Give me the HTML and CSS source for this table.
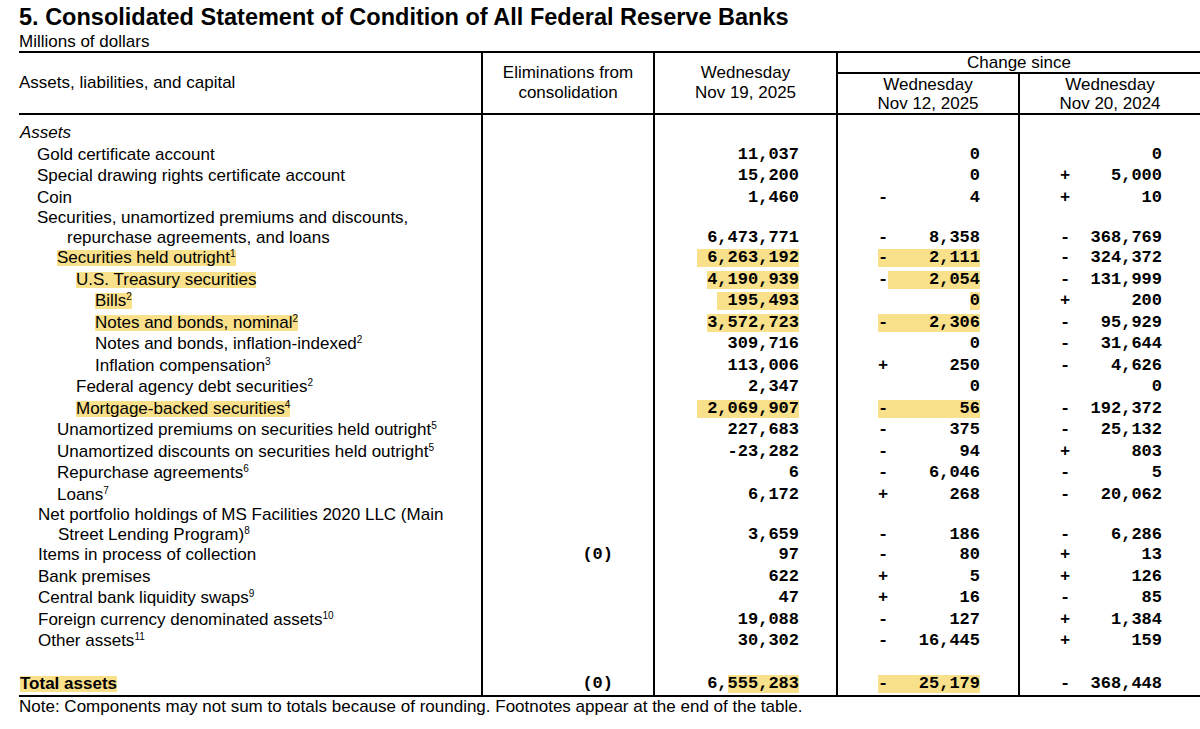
FILE: index.html
```html
<!DOCTYPE html>
<html lang="en">
<head>
<meta charset="utf-8">
<title>Consolidated Statement of Condition of All Federal Reserve Banks</title>
<link rel="stylesheet" href="styles.css">
</head>
<body>
<div class="page">
  <h1 class="title">5. Consolidated Statement of Condition of All Federal Reserve Banks</h1>
  <p class="unit">Millions of dollars</p>
  <table class="stmt">
    <colgroup>
      <col class="w-label"><col class="w-elim"><col class="w-val"><col class="w-chg"><col class="w-chg">
    </colgroup>
    <thead>
      <tr>
        <th rowspan="2" class="h-label">Assets, liabilities, and capital</th>
        <th rowspan="2" class="h-main vl">Eliminations from<br>consolidation</th>
        <th rowspan="2" class="h-main vl">Wednesday<br>Nov 19, 2025</th>
        <th colspan="2" class="h-change vl">Change since</th>
      </tr>
      <tr>
        <th class="h-sub vl">Wednesday<br>Nov 12, 2025</th>
        <th class="h-sub vl">Wednesday<br>Nov 20, 2024</th>
      </tr>
    </thead>
    <tbody>
      <tr class="first">
        <td class="lab l0"><em>Assets</em></td>
        <td class="num elim vl"></td><td class="num val vl"></td><td class="num chg vl"></td><td class="num chg vl"></td>
      </tr>
      <tr>
        <td class="lab l1">Gold certificate account</td>
        <td class="num elim vl"></td>
        <td class="num val vl">11,037</td>
        <td class="num chg vl"><span class="fld"><span class="sg"></span><span>0</span></span></td>
        <td class="num chg vl"><span class="fld"><span class="sg"></span><span>0</span></span></td>
      </tr>
      <tr>
        <td class="lab l1">Special drawing rights certificate account</td>
        <td class="num elim vl"></td>
        <td class="num val vl">15,200</td>
        <td class="num chg vl"><span class="fld"><span class="sg"></span><span>0</span></span></td>
        <td class="num chg vl"><span class="fld"><span class="sg">+</span><span>5,000</span></span></td>
      </tr>
      <tr>
        <td class="lab l1">Coin</td>
        <td class="num elim vl"></td>
        <td class="num val vl">1,460</td>
        <td class="num chg vl"><span class="fld"><span class="sg">-</span><span>4</span></span></td>
        <td class="num chg vl"><span class="fld"><span class="sg">+</span><span>10</span></span></td>
      </tr>
      <tr class="two">
        <td class="lab hang-a">Securities, unamortized premiums and discounts,<br>repurchase agreements, and loans</td>
        <td class="num elim vl"></td>
        <td class="num val vl">6,473,771</td>
        <td class="num chg vl"><span class="fld"><span class="sg">-</span><span>8,358</span></span></td>
        <td class="num chg vl"><span class="fld"><span class="sg">-</span><span>368,769</span></span></td>
      </tr>
      <tr>
        <td class="lab l2"><span class="hl-t">Securities held outright<sup>1</sup></span></td>
        <td class="num elim vl"></td>
        <td class="num val vl"><span class="hl pad">6,263,192</span></td>
        <td class="num chg vl"><span class="fld hl"><span class="sg">-</span><span>2,111</span></span></td>
        <td class="num chg vl"><span class="fld"><span class="sg">-</span><span>324,372</span></span></td>
      </tr>
      <tr>
        <td class="lab l3"><span class="hl-t">U.S. Treasury securities</span></td>
        <td class="num elim vl"></td>
        <td class="num val vl"><span class="hl">4,190,939</span></td>
        <td class="num chg vl"><span class="fld"><span class="sg">-</span><span class="hl fill">2,054</span></span></td>
        <td class="num chg vl"><span class="fld"><span class="sg">-</span><span>131,999</span></span></td>
      </tr>
      <tr>
        <td class="lab l4"><span class="hl-t">Bills<sup>2</sup></span></td>
        <td class="num elim vl"></td>
        <td class="num val vl"><span class="hl pad">195,493</span></td>
        <td class="num chg vl"><span class="fld"><span class="sg"></span><span class="hl">0</span></span></td>
        <td class="num chg vl"><span class="fld"><span class="sg">+</span><span>200</span></span></td>
      </tr>
      <tr>
        <td class="lab l4"><span class="hl-t">Notes and bonds, nominal<sup>2</sup></span></td>
        <td class="num elim vl"></td>
        <td class="num val vl"><span class="hl">3,572,723</span></td>
        <td class="num chg vl"><span class="fld hl"><span class="sg">-</span><span>2,306</span></span></td>
        <td class="num chg vl"><span class="fld"><span class="sg">-</span><span>95,929</span></span></td>
      </tr>
      <tr>
        <td class="lab l4">Notes and bonds, inflation-indexed<sup>2</sup></td>
        <td class="num elim vl"></td>
        <td class="num val vl">309,716</td>
        <td class="num chg vl"><span class="fld"><span class="sg"></span><span>0</span></span></td>
        <td class="num chg vl"><span class="fld"><span class="sg">-</span><span>31,644</span></span></td>
      </tr>
      <tr>
        <td class="lab l4">Inflation compensation<sup>3</sup></td>
        <td class="num elim vl"></td>
        <td class="num val vl">113,006</td>
        <td class="num chg vl"><span class="fld"><span class="sg">+</span><span>250</span></span></td>
        <td class="num chg vl"><span class="fld"><span class="sg">-</span><span>4,626</span></span></td>
      </tr>
      <tr>
        <td class="lab l3">Federal agency debt securities<sup>2</sup></td>
        <td class="num elim vl"></td>
        <td class="num val vl">2,347</td>
        <td class="num chg vl"><span class="fld"><span class="sg"></span><span>0</span></span></td>
        <td class="num chg vl"><span class="fld"><span class="sg"></span><span>0</span></span></td>
      </tr>
      <tr>
        <td class="lab l3"><span class="hl-t">Mortgage-backed securities<sup>4</sup></span></td>
        <td class="num elim vl"></td>
        <td class="num val vl"><span class="hl pad">2,069,907</span></td>
        <td class="num chg vl"><span class="fld hl"><span class="sg">-</span><span>56</span></span></td>
        <td class="num chg vl"><span class="fld"><span class="sg">-</span><span>192,372</span></span></td>
      </tr>
      <tr>
        <td class="lab l2">Unamortized premiums on securities held outright<sup>5</sup></td>
        <td class="num elim vl"></td>
        <td class="num val vl">227,683</td>
        <td class="num chg vl"><span class="fld"><span class="sg">-</span><span>375</span></span></td>
        <td class="num chg vl"><span class="fld"><span class="sg">-</span><span>25,132</span></span></td>
      </tr>
      <tr>
        <td class="lab l2">Unamortized discounts on securities held outright<sup>5</sup></td>
        <td class="num elim vl"></td>
        <td class="num val vl">-23,282</td>
        <td class="num chg vl"><span class="fld"><span class="sg">-</span><span>94</span></span></td>
        <td class="num chg vl"><span class="fld"><span class="sg">+</span><span>803</span></span></td>
      </tr>
      <tr>
        <td class="lab l2">Repurchase agreements<sup>6</sup></td>
        <td class="num elim vl"></td>
        <td class="num val vl">6</td>
        <td class="num chg vl"><span class="fld"><span class="sg">-</span><span>6,046</span></span></td>
        <td class="num chg vl"><span class="fld"><span class="sg">-</span><span>5</span></span></td>
      </tr>
      <tr>
        <td class="lab l2">Loans<sup>7</sup></td>
        <td class="num elim vl"></td>
        <td class="num val vl">6,172</td>
        <td class="num chg vl"><span class="fld"><span class="sg">+</span><span>268</span></span></td>
        <td class="num chg vl"><span class="fld"><span class="sg">-</span><span>20,062</span></span></td>
      </tr>
      <tr class="two">
        <td class="lab hang-b">Net portfolio holdings of MS Facilities 2020 LLC (Main<br>Street Lending Program)<sup>8</sup></td>
        <td class="num elim vl"></td>
        <td class="num val vl">3,659</td>
        <td class="num chg vl"><span class="fld"><span class="sg">-</span><span>186</span></span></td>
        <td class="num chg vl"><span class="fld"><span class="sg">-</span><span>6,286</span></span></td>
      </tr>
      <tr>
        <td class="lab l1b">Items in process of collection</td>
        <td class="num elim vl">(0)</td>
        <td class="num val vl">97</td>
        <td class="num chg vl"><span class="fld"><span class="sg">-</span><span>80</span></span></td>
        <td class="num chg vl"><span class="fld"><span class="sg">+</span><span>13</span></span></td>
      </tr>
      <tr>
        <td class="lab l1b">Bank premises</td>
        <td class="num elim vl"></td>
        <td class="num val vl">622</td>
        <td class="num chg vl"><span class="fld"><span class="sg">+</span><span>5</span></span></td>
        <td class="num chg vl"><span class="fld"><span class="sg">+</span><span>126</span></span></td>
      </tr>
      <tr>
        <td class="lab l1b">Central bank liquidity swaps<sup>9</sup></td>
        <td class="num elim vl"></td>
        <td class="num val vl">47</td>
        <td class="num chg vl"><span class="fld"><span class="sg">+</span><span>16</span></span></td>
        <td class="num chg vl"><span class="fld"><span class="sg">-</span><span>85</span></span></td>
      </tr>
      <tr>
        <td class="lab l1b">Foreign currency denominated assets<sup>10</sup></td>
        <td class="num elim vl"></td>
        <td class="num val vl">19,088</td>
        <td class="num chg vl"><span class="fld"><span class="sg">-</span><span>127</span></span></td>
        <td class="num chg vl"><span class="fld"><span class="sg">+</span><span>1,384</span></span></td>
      </tr>
      <tr>
        <td class="lab l1b">Other assets<sup>11</sup></td>
        <td class="num elim vl"></td>
        <td class="num val vl">30,302</td>
        <td class="num chg vl"><span class="fld"><span class="sg">-</span><span>16,445</span></span></td>
        <td class="num chg vl"><span class="fld"><span class="sg">+</span><span>159</span></span></td>
      </tr>
      <tr class="blank">
        <td class="lab"></td>
        <td class="num elim vl"></td><td class="num val vl"></td><td class="num chg vl"></td><td class="num chg vl"></td>
      </tr>
      <tr class="total">
        <td class="lab l0"><span class="hl-t"><strong>Total assets</strong></span></td>
        <td class="num elim vl">(0)</td>
        <td class="num val vl">6,<span class="hl">555,283</span></td>
        <td class="num chg vl"><span class="fld hl"><span class="sg">-</span><span>25,179</span></span></td>
        <td class="num chg vl"><span class="fld"><span class="sg">-</span><span>368,448</span></span></td>
      </tr>
    </tbody>
  </table>
  <p class="note">Note: Components may not sum to totals because of rounding. Footnotes appear at the end of the table.</p>
</div>
</body>
</html>
```

FILE: styles.css
```css
* { box-sizing: border-box; }

html, body {
  margin: 0;
  padding: 0;
  background: #ffffff;
}

body {
  font-family: "Liberation Sans", Arial, sans-serif;
  font-size: 17px;
  color: #000000;
  overflow: hidden;
}

.page {
  width: 1200px;
  padding: 4px 0 0 19px;
}

.title {
  margin: 0;
  font-size: 23.5px;
  font-weight: bold;
  line-height: 26px;
}

.unit {
  margin: 3px 0 0;
  font-size: 17px;
  line-height: 18px;
}

.stmt {
  margin-top: 0;
  width: 1181px;
  table-layout: fixed;
  border-collapse: separate;
  border-spacing: 0;
  border-top: 2px solid #000;
}

.w-label { width: 462px; }
.w-elim { width: 172px; }
.w-val { width: 183px; }
.w-chg { width: 182px; }

.stmt th {
  padding: 0;
  font-weight: normal;
  text-align: center;
  vertical-align: middle;
  border-bottom: 2px solid #000;
}

.stmt .vl { border-left: 2px solid #000; }

.h-label {
  text-align: left !important;
  line-height: 20px;
}

.h-main { line-height: 20px; }

.h-change { line-height: 19px; }

.h-sub {
  line-height: 19px;
  padding-top: 1px !important;
}

.stmt td {
  padding: 0;
  height: 21.5px;
  line-height: 21.5px;
  white-space: nowrap;
  vertical-align: bottom;
}

.stmt tr.first td { padding-top: 7px; height: 28.5px; }

.stmt tr.two td { line-height: 19.5px; height: 39px; }

.stmt tr.blank td { height: 22.5px; }

.stmt tr.total td {
  height: 20.5px;
  line-height: 20.5px;
  border-bottom: 2px solid #000;
}

.lab { text-align: left; }
.l0 { padding-left: 1px !important; }
.l1 { padding-left: 18px !important; }
.l1b { padding-left: 19px !important; }
.l2 { padding-left: 38px !important; }
.l3 { padding-left: 57px !important; }
.l4 { padding-left: 76px !important; }

.hang-a {
  padding-left: 48px !important;
  text-indent: -30px;
}

.hang-b {
  padding-left: 39px !important;
  text-indent: -20px;
}

.lab sup {
  font-size: 10px;
  line-height: 0;
  vertical-align: 6px;
}

.num {
  font-family: "Liberation Mono", "Courier New", monospace;
  font-weight: bold;
  text-align: right;
}

.elim { padding-right: 40px !important; }
.val { padding-right: 37px !important; }
.chg { padding-right: 38px !important; }

.fld {
  display: inline-block;
  width: 10ch;
  text-align: right;
  vertical-align: baseline;
}

.fld .sg {
  float: left;
  width: 1ch;
  text-align: left;
}

.hl {
  display: inline-block;
  background: #f9e08b;
  line-height: 18px;
}

.pad { padding-left: 1ch; }

.fill {
  width: 9ch;
  text-align: right;
}

.hl-t {
  display: inline-block;
  background: #f9e08b;
  line-height: 16px;
  text-indent: 0;
}

.note {
  margin: 0;
  line-height: 20px;
  font-size: 17px;
}
```
